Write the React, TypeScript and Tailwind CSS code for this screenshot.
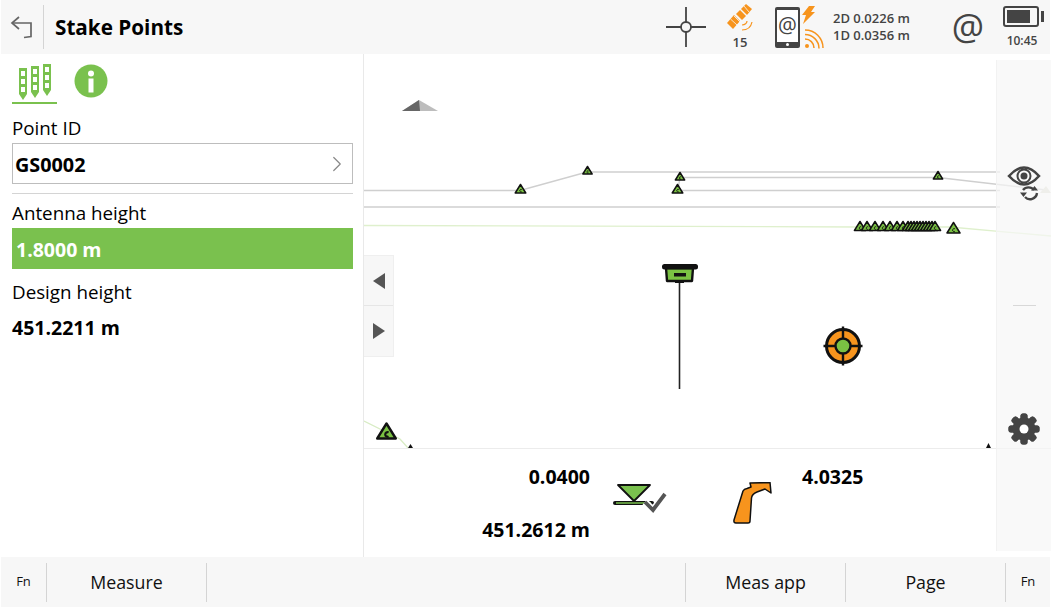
import { ChevronRight } from "lucide-react";

const font = { fontFamily: '"Open Sans", "Noto Sans", sans-serif' };

function Pt({ x, y, s = 9 }: { x: number; y: number; s?: number }) {
  // y is the base of the triangle
  const w = s * 0.62;
  return (
    <g>
      <path d={`M${x} ${y - s}L${x + w} ${y}H${x - w}Z`} fill="#7ac143" stroke="#111" strokeWidth={s > 12 ? 2.4 : 1.5} strokeLinejoin="round" />
      <path d={`M${x + s * 0.14} ${y - s * 0.4}A${s * 0.15} ${s * 0.15} 0 1 0 ${x + s * 0.14} ${y - s * 0.14}`} fill="none" stroke="#111" strokeWidth={s > 12 ? 2.2 : 1} />
    </g>
  );
}

const clusterXs = [860, 867, 875, 883, 890, 897, 903, 908, 911, 914, 917, 920, 923, 926, 929, 932, 935];

function MapCanvas() {
  return (
    <svg className="absolute inset-0 h-full w-full" viewBox="364 54 687 394">
      <path d="M402 111L419 100L438 111Z" fill="#bdbdbd" />
      <path d="M402 111L419 100L420 111Z" fill="#666" />
      <g stroke="#cfcfcf" strokeWidth="1.5" fill="none">
        <path d="M364 190.500H520L587 172H1000" />
        <path d="M680 177.500H938L1046 190" />
        <path d="M678 190.500H1000" />
        <path d="M680 177L678 190" />
        <path d="M364 207H1000" />
      </g>
      <path d="M364 225.500L860 227H950L1051 236" stroke="#dff0cd" strokeWidth="1.300" fill="none" />
      <path d="M364 421L400 439L408 448" stroke="#d8ecc4" strokeWidth="1.300" fill="none" />
      <Pt x={520.500} y={193} s={8.500} />
      <Pt x={587.500} y={174} s={7.500} />
      <Pt x={680} y={180} s={7.500} />
      <Pt x={677.500} y={193} s={8.500} />
      <Pt x={938} y={179} s={7.500} />
      {clusterXs.map((x) => (
        <Pt key={x} x={x} y={230.500} s={9} />
      ))}
      <Pt x={953.500} y={233} s={10.500} />
      <Pt x={386.500} y={438.500} s={15} />
      <path d="M408 448L410.500 444L413 448Z M986 448L988.500 443L991 448Z" fill="#111" />
      <path d="M1040 193L1046 186L1051 193Z" fill="#dddccf" />
      {/* rover and pole */}
      <path d="M679.500 282V389" stroke="#222" strokeWidth="1.600" />
      <path d="M666 268H693L692 281H667Z" fill="#7ac143" stroke="#111" strokeWidth="2.400" strokeLinejoin="round" />
      <rect x="662" y="264" width="36" height="5.500" rx="2.500" fill="#111" />
      <rect x="674" y="273" width="12" height="3.500" fill="#111" />
      <rect x="675" y="280" width="9" height="3" fill="#111" />
      {/* target */}
      <circle cx="843" cy="346" r="16.500" fill="#f7941d" stroke="#111" strokeWidth="3" />
      <path d="M843 326.500V365.500M823.500 346H862.500" stroke="#111" strokeWidth="2.400" />
      <circle cx="843" cy="346" r="7.500" fill="#7ac143" stroke="#111" strokeWidth="2.400" />
    </svg>
  );
}

function BackArrow() {
  return (
    <svg width="24" height="24" viewBox="0 0 24 24" fill="none" stroke="#666" strokeWidth="1.700">
      <path d="M9 1L2 7L9 13" />
      <path d="M2 7H21V20.500L14 21.500" />
    </svg>
  );
}

function Satellite() {
  return (
    <svg width="26" height="28" viewBox="0 0 26 28" fill="none">
      <g fill="#f7941d">
        <path d="M0 19L7 11L13 17L6 25Z" />
        <path d="M14 5L19 0L25 5L20 11Z" />
        <path d="M9 10L13 6L19 12L15 16Z" />
      </g>
      <path d="M3.500 15L10 21M7 12L13 18M17 2L22 8" stroke="#f7f7f7" strokeWidth="0.800" />
      <path d="M15 21c3 0 5-2 5-4M15 26c5 0 9-3 10-8" stroke="#f7941d" strokeWidth="1.200" />
    </svg>
  );
}

function Phone() {
  return (
    <div className="relative flex h-[41px] w-[25px] flex-col rounded-[2px] bg-[#444] px-[2px] pt-[3px] pb-[6px]">
      <div className="flex flex-1 items-center justify-center bg-white text-[21px] leading-none text-[#444]">@</div>
      <div className="absolute bottom-[1.500px] left-[11px] h-[3px] w-[3px] rounded-full bg-white" />
    </div>
  );
}

function StakeIcon() {
  const stake = (x: number, y: number) => (
    <g key={x}>
      <path d={`M${x} ${y}h8v26l-4 6-4-6z`} fill="#7ac14e" />
      <path d={`M${x + 2} ${y + 3}h4v5h-4zM${x + 2} ${y + 11}h4v5h-4zM${x + 2} ${y + 19}h4v5h-4z`} fill="#fff" />
    </g>
  );
  return (
    <svg width="34" height="36" viewBox="0 0 34 36">
      {stake(1, 4)}
      {stake(13, 2)}
      {stake(25, 0)}
    </svg>
  );
}

function Gear() {
  const teeth = [0, 45, 90, 135, 180, 225, 270, 315];
  return (
    <svg width="32" height="32" viewBox="0 0 32 32">
      {teeth.map((a) => (
        <rect key={a} x="12.500" y="0.500" width="7" height="31" rx="2.500" fill="#444" transform={`rotate(${a} 16 16)`} />
      ))}
      <circle cx="16" cy="16" r="11.500" fill="#444" />
      <circle cx="16" cy="16" r="4.500" fill="#fff" />
    </svg>
  );
}

function Eye() {
  return (
    <svg width="34" height="38" viewBox="0 0 34 38" fill="none" stroke="#444">
      <path d="M2 11Q17 -6 32 11Q17 28 2 11Z" strokeWidth="2.600" />
      <circle cx="17" cy="11" r="6.500" strokeWidth="2" />
      <circle cx="17" cy="11" r="3.500" fill="#444" stroke="none" />
      <path d="M16 25a7 7 0 0 1 11 0M30 28a7 7 0 0 1-12 4" strokeWidth="2.400" />
      <path d="M24 25.500h7l-3.500-4.500zM13 27.500h7l-3.500 4.500z" fill="#444" stroke="none" />
    </svg>
  );
}

function FnKey({ label, className }: { label: string; className: string }) {
  return (
    <div className={`flex h-[39px] items-center justify-center border-[#d4d4d4] ${className}`}>{label}</div>
  );
}

export default function App() {
  return (
    <div className="flex h-[607px] w-[1051px] flex-col overflow-hidden bg-white text-black" style={font}>
      <header className="mx-[1px] flex h-[54px] items-center bg-[#f7f7f7]">
        <div className="flex h-[44px] w-[43px] items-center justify-center border-r border-[#d4d4d4] pt-[1px]">
          <BackArrow />
        </div>
        <h1 className="ml-[11px] pt-[1px] text-[20.700px] font-bold">Stake Points</h1>
        <div className="ml-auto flex items-center">
          <svg width="40" height="40" viewBox="0 0 40 40" fill="none" stroke="#444" strokeWidth="1.800" className="mr-[19px]">
            <circle cx="20" cy="20" r="5" />
            <path d="M20 0V15M20 25V40M0 20H15M25 20H40" />
          </svg>
          <div className="mr-[20px] flex w-[30px] flex-col items-center">
            <Satellite />
            <span className="pt-[2px] text-[13px] leading-[16px] font-semibold text-[#444]">15</span>
          </div>
          <Phone />
          <div className="mr-[11px] flex w-[22px] flex-col">
            <svg width="16" height="18" viewBox="0 0 16 18">
              <path d="M9 0H15L11 6H15L3 18L6 9H2Z" fill="#f7941d" />
            </svg>
            <svg width="20" height="20" viewBox="0 0 20 20" fill="none" stroke="#f7941d" strokeWidth="1.500" className="mt-[5px] ml-[4px]">
              <circle cx="3" cy="17" r="2" fill="#f7941d" stroke="none" />
              <path d="M1 10a9 9 0 0 1 9 9M1 5.500a14 14 0 0 1 14 14M1 1a18 18 0 0 1 18 18" />
            </svg>
          </div>
          <div className="w-[114px] text-[13px] leading-[17px] font-semibold text-[#444]">
            <div>2D 0.0226 m</div>
            <div>1D 0.0356 m</div>
          </div>
          <span className="mr-[10px] w-[42px] text-center text-[36px] leading-none text-[#444]">@</span>
          <div className="mr-[5px] flex w-[46px] flex-col items-center">
            <div className="relative -ml-[2px] h-[21px] w-[36px] rounded-[3px] border-[2px] border-[#444] p-[2px]">
              <div className="h-full w-[23px] bg-[#444]" />
              <div className="absolute top-[3px] -right-[7px] h-[11px] w-[3px] bg-[#444]" />
            </div>
            <span className="mt-[6px] text-[12px] leading-[16px] font-semibold text-[#444]">10:45</span>
          </div>
        </div>
      </header>

      <main className="flex min-h-0 flex-1">
        <aside className="flex w-[364px] flex-col border-r border-[#e9e9e9] pr-[10px] pl-[12px]">
          <div className="mt-[9px] flex h-[41px] items-start">
            <div className="flex h-[41px] w-[45px] justify-center border-b-2 border-[#7ac14e] pt-[1px]">
              <StakeIcon />
            </div>
            <svg width="34" height="34" viewBox="0 0 34 34" className="mt-[1px] ml-[17px]">
              <circle cx="17" cy="17" r="16.500" fill="#7ac14e" />
              <circle cx="17" cy="9.500" r="3" fill="#fff" />
              <rect x="14.500" y="14.500" width="5" height="14" fill="#fff" />
            </svg>
          </div>
          <label className="mt-[12px] text-[18.800px] leading-[25px]">Point ID</label>
          <div className="mt-[2px] flex h-[41px] items-center justify-between border border-[#bdbdbd] pr-[2px] pl-[2px] text-[19.800px] font-bold">
            <span className="pt-[2px]">GS0002</span>
            <ChevronRight className="h-[26px] w-[26px] text-[#888]" strokeWidth={1.100} />
          </div>
          <div className="mt-[9px] border-b border-[#d4d4d4]" />
          <label className="mt-[7px] text-[18.800px] leading-[25px]">Antenna height</label>
          <div className="mt-[2px] flex h-[41px] items-center bg-[#7ac14e] px-[4px] pt-[2px] text-[19.500px] font-bold text-white">1.8000 m</div>
          <label className="mt-[11px] text-[18.800px] leading-[25px]">Design height</label>
          <div className="mt-[10px] text-[19.500px] leading-[26px] font-bold">451.2211 m</div>
        </aside>

        <section className="relative flex min-w-0 flex-1 flex-col">
          <div className="relative h-[394px]">
            <MapCanvas />
            <div className="absolute top-[201px] left-0 flex w-[30px] flex-col border border-l-0 border-[#efefef] bg-[#f7f7f7]">
              <div className="flex h-[50px] items-center justify-center border-b border-[#e6e6e6]">
                <span className="h-0 w-0 border-y-[8px] border-r-[12px] border-y-transparent border-r-[#555]" />
              </div>
              <div className="flex h-[50px] items-center justify-center">
                <span className="h-0 w-0 border-y-[8px] border-l-[12px] border-y-transparent border-l-[#555]" />
              </div>
            </div>
          </div>

          <div className="grid flex-1 grid-cols-[226px_212px_1fr] border-t border-[#ececec]">
            <div className="flex flex-col items-end pt-[15px] text-[19.500px] leading-[26px] font-bold">
              <span>0.0400</span>
              <span className="mt-[27px]">451.2612 m</span>
            </div>
            <div className="relative">
              <svg width="56" height="36" viewBox="0 0 56 36" fill="none" className="absolute top-[35px] left-[23px]">
                <path d="M5 1H37L21 17Z" fill="#7ac14e" stroke="#111" strokeWidth="1.800" strokeLinejoin="round" />
                <path d="M2 19H39" stroke="#111" strokeWidth="4" strokeLinecap="round" />
                <path d="M3 19H38" stroke="#7ac14e" strokeWidth="1.500" />
                <path d="M32 18L40 26L52 10" stroke="#fff" strokeWidth="7" />
                <path d="M32 18L40 26L52 10" stroke="#555" strokeWidth="3.800" />
              </svg>
              <svg width="42" height="46" viewBox="0 0 42 46" className="absolute top-[33px] left-[143px]">
                <path d="M1 38L10 9Q11 7 14 6.500L18 5L17 1L37 0.500L38 11L32 7L24 10Q19 12 18.500 16L17 39Q17 41 15 41H3Q0.500 41 1 38Z" fill="#f7941d" stroke="#111" strokeWidth="1.500" strokeLinejoin="round" />
              </svg>
            </div>
            <div className="pt-[15px] text-[19.500px] leading-[26px] font-bold">4.0325</div>
          </div>

          <div className="absolute top-[6px] right-0 bottom-[6px] flex w-[55px] flex-col items-center border-l border-[#f2f2f2] bg-[#f7f7f7]/70">
            <div className="mt-[105px]">
              <Eye />
            </div>
            <div className="mt-[102px] h-px w-[23px] bg-[#d8d8d8]" />
            <div className="mt-[107px]">
              <Gear />
            </div>
          </div>
        </section>
      </main>

      <footer className="mx-[1px] flex h-[50px] items-center bg-[#f7f7f7] text-[17.800px] text-[#111]">
        <FnKey label="Fn" className="w-[46px] border-r text-[13px]" />
        <FnKey label="Measure" className="w-[160px] border-r" />
        <div className="flex-1" />
        <FnKey label="Meas app" className="w-[161px] border-x" />
        <FnKey label="Page" className="w-[160px] border-r" />
        <FnKey label="Fn" className="w-[44px] text-[13px]" />
      </footer>
    </div>
  );
}
